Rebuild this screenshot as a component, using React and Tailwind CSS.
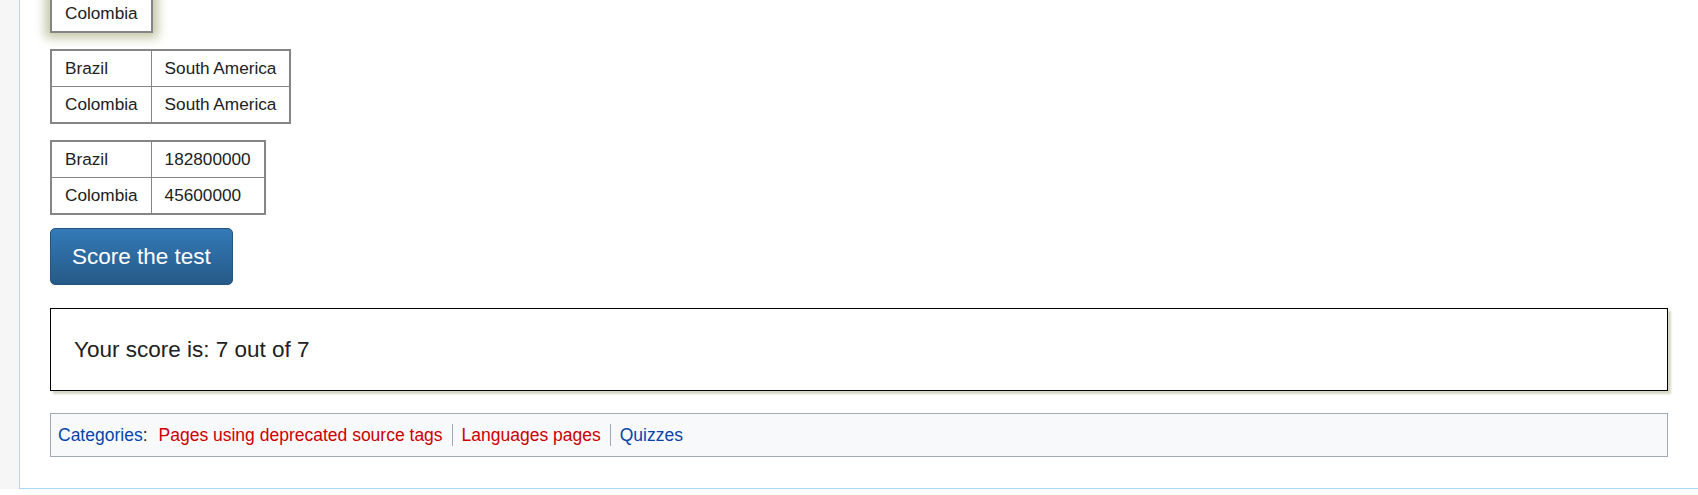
import React from 'react';

const countries = [
    { name: 'Brazil', region: 'South America', pop: '182800000' },
    { name: 'Colombia', region: 'South America', pop: '45600000' },
];

const cell = 'border border-[#858585] px-[13px] py-[5px] leading-[25px]';

export default function App() {
    return (
        <div className="min-h-[495px] bg-[#f6f6f6] font-['Liberation_Sans',Arial,sans-serif] text-[17.2px] text-[#202122]">
            <div className="ml-[19px] border-l border-b border-[#a7d7f9] bg-white px-[30px] pb-[31px]">
                {/* Matched pair being dragged (top of it is scrolled away) */}
                <table className="-mt-[6px] border-collapse border-2 border-[#858585] bg-white shadow-[0_0_10px_5px_#c4c7a8]">
                    <tbody>
                        <tr>
                            <td className={cell}>Colombia</td>
                        </tr>
                    </tbody>
                </table>

                <table className="mt-[16px] border-collapse border-2 border-[#858585]">
                    <tbody>
                        {countries.map(c => (
                            <tr key={c.name}>
                                <td className={cell}>{c.name}</td>
                                <td className={cell}>{c.region}</td>
                            </tr>
                        ))}
                    </tbody>
                </table>

                <table className="mt-[16px] border-collapse border-2 border-[#858585]">
                    <tbody>
                        {countries.map(c => (
                            <tr key={c.name}>
                                <td className={cell}>{c.name}</td>
                                <td className={cell}>{c.pop}</td>
                            </tr>
                        ))}
                    </tbody>
                </table>

                <button className="mt-[13px] block h-[57px] rounded-[5px] border border-[#245580] bg-linear-to-b from-[#337ab7] to-[#265a88] px-[21px] text-[22.5px] leading-[55px] text-white">
                    Score the test
                </button>

                <div className="mt-[23px] flex h-[83px] items-center border border-black bg-white px-[23px] text-[22.5px] shadow-[3px_3px_2px_#d6d8c3]">
                    Your score is: 7 out of 7
                </div>

                <div className="mt-[22px] flex h-[44px] items-center border border-[#a2a9b1] bg-[#f8f9fa] px-[7px] text-[17.5px] leading-[22px]">
                    <a className="text-[#0645ad]">Categories</a>
                    <span className="mr-[11px]">:</span>
                    <span className="pr-[9px] text-[#cc0000]">Pages using deprecated source tags</span>
                    <span className="border-l border-[#a2a9b1] px-[9px] text-[#cc0000]">Languages pages</span>
                    <span className="border-l border-[#a2a9b1] px-[9px] text-[#0645ad]">Quizzes</span>
                </div>
            </div>
        </div>
    );
}
